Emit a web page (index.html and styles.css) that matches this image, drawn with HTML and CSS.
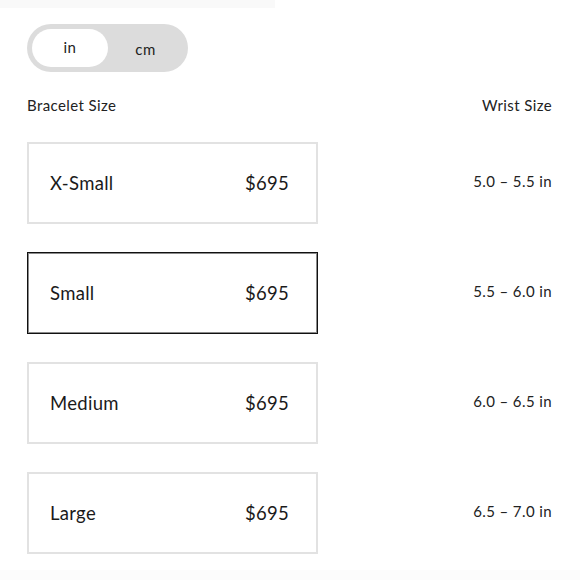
FILE: index.html
```html
<!DOCTYPE html>
<html>
<head>
<meta charset="utf-8">
<link rel="stylesheet" href="styles.css">
</head>
<body>
<div class="topbar"></div>
<div class="page">
  <div class="toggle">
    <div class="opt active">in</div>
    <div class="opt">cm</div>
  </div>
  <div class="head">
    <span>Bracelet Size</span>
    <span>Wrist Size</span>
  </div>
  <div class="rows">
    <div class="row">
      <div class="card"><span>X-Small</span><span>$695</span></div>
      <div class="wrist">5.0 – 5.5 in</div>
    </div>
    <div class="row">
      <div class="card selected"><span>Small</span><span>$695</span></div>
      <div class="wrist">5.5 – 6.0 in</div>
    </div>
    <div class="row">
      <div class="card"><span>Medium</span><span>$695</span></div>
      <div class="wrist">6.0 – 6.5 in</div>
    </div>
    <div class="row">
      <div class="card"><span>Large</span><span>$695</span></div>
      <div class="wrist">6.5 – 7.0 in</div>
    </div>
  </div>
</div>
<div class="bottombar"></div>
</body>
</html>
```
FILE: styles.css
```css
html, body {
  margin: 0;
  padding: 0;
  background: #fff;
}
body {
  width: 580px;
  height: 580px;
  overflow: hidden;
  font-family: Lato, "Noto Sans", sans-serif;
  color: #1a1a1a;
  position: relative;
}
.topbar {
  width: 275px;
  height: 8px;
  background: #f9f9f9;
}
.page {
  padding: 16px 28px 0 27px;
}
.toggle {
  width: 161px;
  height: 48px;
  box-sizing: border-box;
  padding: 5px;
  border-radius: 24px;
  background: #dcdcdc;
  display: flex;
}
.opt {
  width: 76px;
  height: 38px;
  border-radius: 19px;
  display: flex;
  align-items: center;
  justify-content: center;
  font-size: 15px;
  letter-spacing: 0.4px;
  color: #222;
}
.opt.active {
  background: #fff;
  padding-bottom: 2px;
  box-sizing: border-box;
}
.opt + .opt {
  flex: 1;
  padding-top: 2px;
  box-sizing: border-box;
}
.head {
  margin-top: 24px;
  display: flex;
  justify-content: space-between;
  font-size: 15px;
  letter-spacing: 0.4px;
  line-height: 18px;
  color: #222;
}
.rows {
  margin-top: 28px;
  display: flex;
  flex-direction: column;
  gap: 28px;
}
.row {
  display: flex;
  align-items: center;
  justify-content: space-between;
}
.card {
  width: 291px;
  height: 82px;
  box-sizing: border-box;
  border: 2px solid #e2e2e2;
  display: flex;
  align-items: center;
  justify-content: space-between;
  padding: 0 27px 0 21px;
  font-size: 18.5px;
  letter-spacing: 0.3px;
  color: #1a1a1a;
}
.card.selected {
  border: 1px solid #111;
  box-shadow: inset 0 0 0 1px #8a8a8a;
  padding: 0 28px 0 22px;
}
.wrist {
  font-size: 15px;
  letter-spacing: 0.4px;
  color: #222;
  margin-top: -5px;
}
.bottombar {
  position: absolute;
  left: 0;
  bottom: 0;
  width: 580px;
  height: 10px;
  background: #fcfcfc;
}
```
